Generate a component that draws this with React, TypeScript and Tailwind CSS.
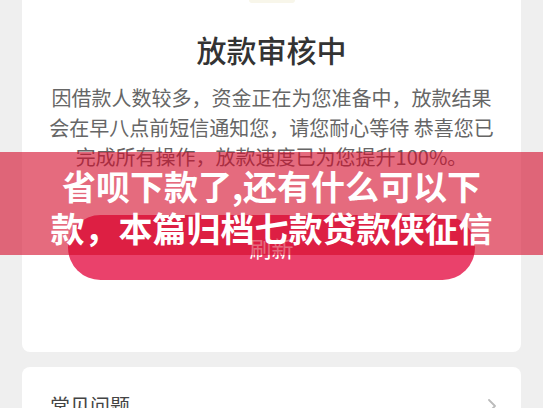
import React from "react";

const cjk = { fontFamily: '"Noto Sans CJK SC", "Noto Sans", sans-serif' };

function ReviewCard() {
  return (
    <div className="bg-white rounded-b-[8px] pb-[72px]">
      <div className="h-[3px] w-[46px] mx-auto rounded-b-full bg-[#f8f6ea]" />
      <h1 className="mt-[26px] text-[30px] leading-[40px] font-medium text-[#333333] text-center">放款审核中</h1>
      <p className="mt-[14px] w-[452px] mx-auto text-[20px] leading-[29.5px] text-[#666666] text-center">
        因借款人数较多，资金正在为您准备中，放款结果会在早八点前短信通知您，请您耐心等待 恭喜您已完成所有操作，放款速度已为您提升100%。
      </p>
      <button className="mt-[43.5px] h-[65px] w-[407px] mx-auto flex items-center justify-center rounded-full bg-[#ea416b] text-white text-[22px]">
        刷新
      </button>
    </div>
  );
}

function FaqCard() {
  return (
    <div className="mt-[15px] bg-white rounded-[8px] pl-[28px] pr-[24px] pt-[25px] pb-[20px] flex items-center justify-between">
      <span className="text-[20px] leading-[28px] text-[#444444]">常见问题</span>
      <svg width="10" height="16" viewBox="0 0 10 16" fill="none">
        <path d="M2 2l6 6-6 6" stroke="#bbbbbb" strokeWidth="1.8" strokeLinecap="round" strokeLinejoin="round" />
      </svg>
    </div>
  );
}

export default function App() {
  return (
    <div className="relative w-[543px] h-[408px] overflow-hidden bg-[#efefef] px-[22px]" style={cjk}>
      <ReviewCard />
      <FaqCard />
      <div className="absolute left-0 right-0 top-[152px] h-[103px] bg-[rgba(212,8,40,0.6)] pt-[13px] text-center text-white font-bold text-[34px] leading-[42px]">
        <div>省呗下款了,还有什么可以下</div>
        <div>款，本篇归档七款贷款侠征信</div>
      </div>
    </div>
  );
}
